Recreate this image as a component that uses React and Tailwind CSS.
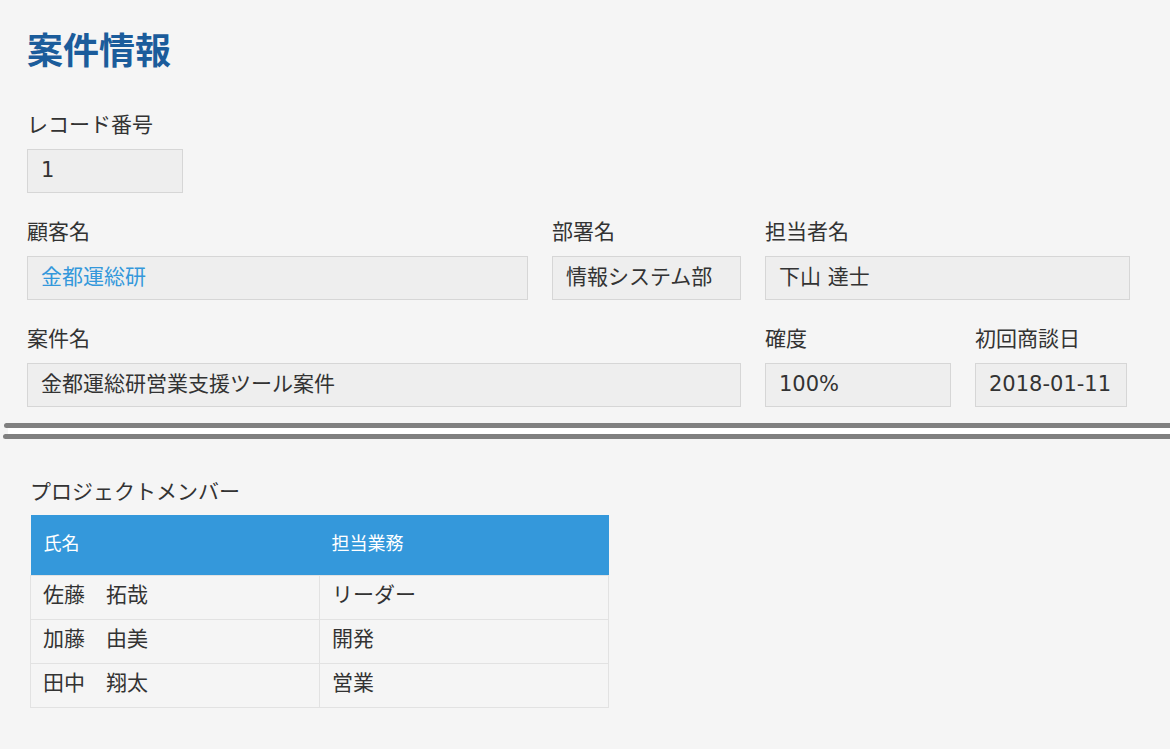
import React from "react";

const font = { fontFamily: '"DejaVu Sans", "Noto Sans CJK JP", "Noto Sans", sans-serif' };

function Field({ label, value, w, link }) {
  return (
    <div className={`flex flex-col ${w}`}>
      <div className="h-[30px] leading-[30px] text-[21px] text-[#333]">{label}</div>
      <div className="mt-[9px] h-[44px] flex items-center px-[13px] pb-[3px] bg-[#eeeeee] border border-[#d6d6d6] text-[21px] leading-[30px] whitespace-nowrap overflow-hidden">
        <span className={link ? "text-[#3498db]" : "text-[#333]"}>{value}</span>
      </div>
    </div>
  );
}

export default function App() {
  const members = [
    ["佐藤　拓哉", "リーダー"],
    ["加藤　由美", "開発"],
    ["田中　翔太", "営業"],
  ];
  return (
    <div className="min-h-[749px] w-[1170px] bg-[#f5f5f5] text-[#333]" style={font}>
      <div className="pl-[27px] pt-[28px]">
        <h1 className="h-[44px] leading-[48px] text-[36px] font-bold text-[#1b5c9b]">案件情報</h1>
        <div className="mt-[38px] flex">
          <Field label="レコード番号" value="1" w="w-[156px]" />
        </div>
        <div className="mt-[24px] flex gap-[24px]">
          <Field label="顧客名" value="金都運総研" w="w-[501px]" link />
          <Field label="部署名" value="情報システム部" w="w-[189px]" />
          <Field label="担当者名" value="下山 達士" w="w-[365px]" />
        </div>
        <div className="mt-[24px] flex gap-[24px]">
          <Field label="案件名" value="金都運総研営業支援ツール案件" w="w-[714px]" />
          <Field label="確度" value="100%" w="w-[186px]" />
          <Field label="初回商談日" value="2018-01-11" w="w-[152px]" />
        </div>
      </div>
      <div className="mt-[16px] ml-[3px] flex flex-col">
        <div className="h-[5px] bg-[#808080] rounded-l-[3px] ml-[1px]" />
        <div className="h-[6px] bg-white ml-[5px]" />
        <div className="h-[5px] bg-[#808080] rounded-l-[3px]" />
      </div>
      <div className="pl-[30px] mt-[38px]">
        <div className="h-[30px] leading-[30px] text-[21px] text-[#333]">プロジェクトメンバー</div>
        <table className="mt-[8px] w-[579px] border-collapse table-fixed">
          <thead>
            <tr className="bg-[#3498db] h-[60px]">
              <th className="text-left font-normal text-white text-[18px] pl-[13px] pb-[2px] w-1/2">氏名</th>
              <th className="text-left font-normal text-white text-[18px] pl-[12px] pb-[2px] w-1/2">担当業務</th>
            </tr>
          </thead>
          <tbody>
            {members.map(([n, r]) => (
              <tr key={n} className="h-[44px]">
                <td className="border border-[#e2e2e2] pl-[12px] pb-[3px] text-[21px] text-[#333]">{n}</td>
                <td className="border border-[#e2e2e2] pl-[12px] pb-[3px] text-[21px] text-[#333]">{r}</td>
              </tr>
            ))}
          </tbody>
        </table>
      </div>
    </div>
  );
}
